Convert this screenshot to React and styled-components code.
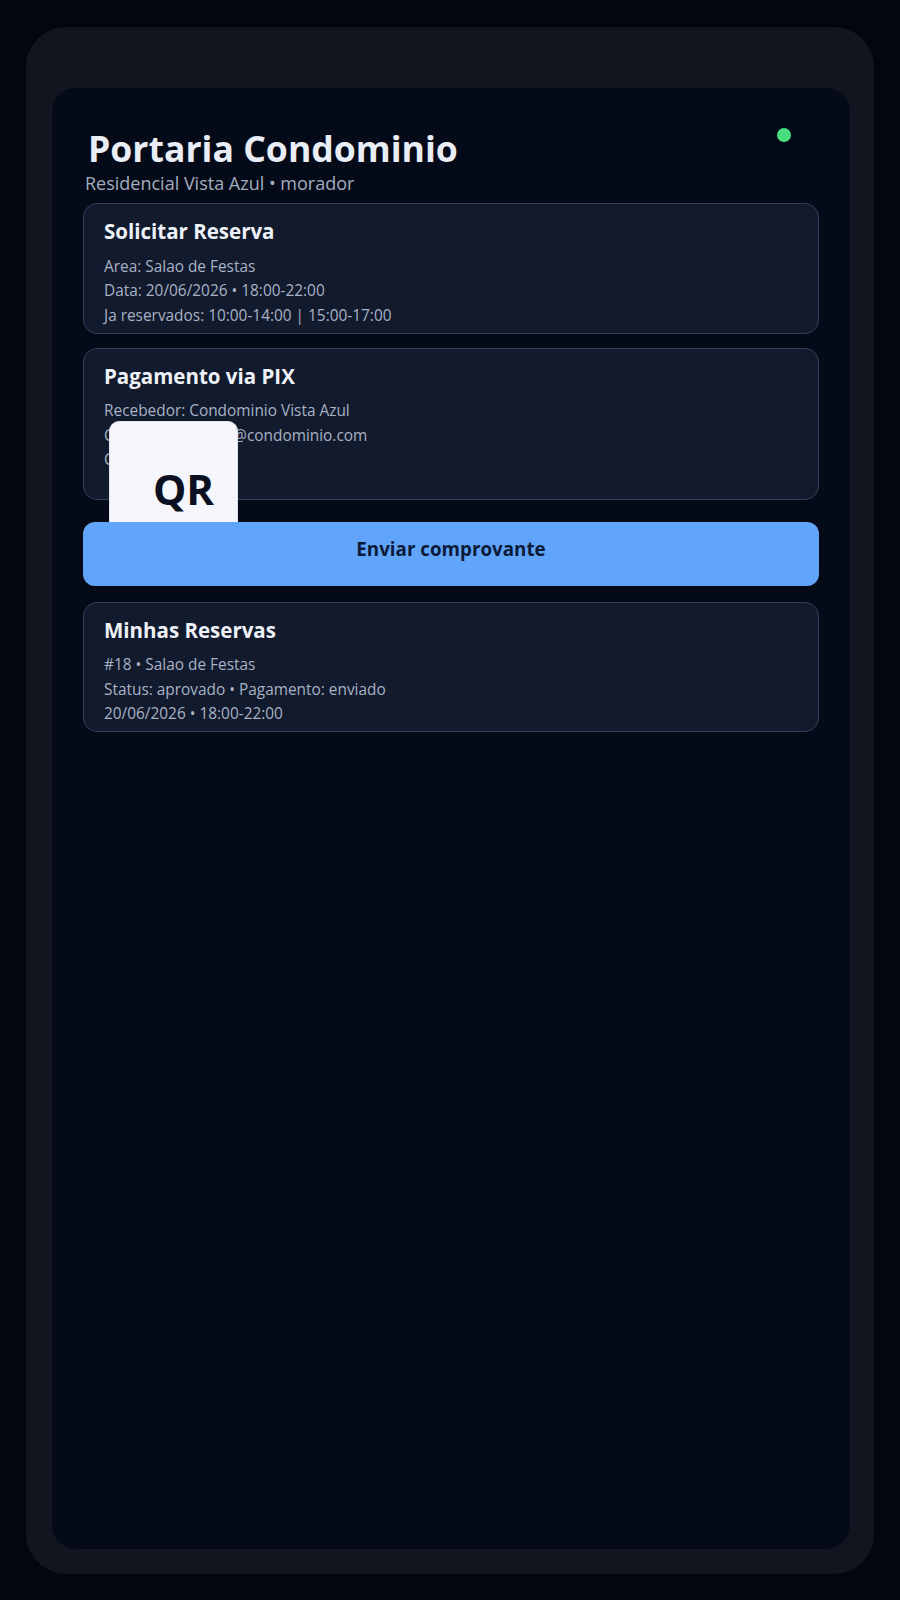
import React from "react";
import styled, { createGlobalStyle } from "styled-components";

const Global = createGlobalStyle`
  html, body { margin: 0; padding: 0; background: #02060f; }
  body { font-family: "Open Sans", "Noto Sans", sans-serif; }
  * { box-sizing: border-box; }
`;

const Page = styled.div`
  width: 900px;
  height: 1600px;
  padding: 27px 26px 26px 26px;
  display: flex;
  background: #02060f;
`;

const Device = styled.div`
  flex: 1;
  display: flex;
  border-radius: 40px;
  background: #11151f;
  padding: 61px 24px 25px 26px;
`;

const Screen = styled.main`
  flex: 1;
  display: flex;
  flex-direction: column;
  border-radius: 24px;
  background: #050a18;
  padding: 38px 31px 0 31px;
`;

const Header = styled.header`
  display: flex;
  justify-content: space-between;
  align-items: flex-start;
  padding-right: 28px;
  margin-bottom: 9px;
`;

const HeaderText = styled.div`
  display: flex;
  flex-direction: column;
  gap: 2px;
`;

const Title = styled.h1`
  margin: 0 0 0 5px;
  font-size: 35.6px;
  line-height: 44px;
  font-weight: 700;
  color: #e9edf5;
`;

const Subtitle = styled.p`
  margin: 0 0 0 2px;
  font-size: 18px;
  line-height: 22px;
  font-weight: 400;
  color: #a3adbf;
`;

const StatusDot = styled.span`
  width: 14px;
  height: 14px;
  margin-top: 2px;
  border-radius: 50%;
  background: #4ade80;
`;

const Stack = styled.div`
  display: flex;
  flex-direction: column;
  gap: 14px;
`;

const Card = styled.section`
  position: relative;
  background: #121a2d;
  border: 1px solid #334056;
  border-radius: 14px;
  padding: 14px 20px ${(p) => p.$bottom || 4.5}px 20px;
`;

const CardTitle = styled.h2`
  margin: 0 0 10.5px 0;
  font-size: 20.5px;
  line-height: 26px;
  font-weight: 700;
  color: #eef2f8;
`;

const Line = styled.p`
  margin: 0;
  font-size: 15.4px;
  line-height: 24.5px;
  color: #a8b2c4;
  white-space: nowrap;
`;

const QrBox = styled.div`
  position: absolute;
  left: 25px;
  top: 72px;
  width: 129px;
  height: 128px;
  z-index: 1;
  display: flex;
  align-items: center;
  justify-content: center;
  padding: 8px 0 0 20px;
  border-radius: 10px;
  background: #f4f6fb;
  border: 1px solid #dfe3ec;
  font-size: 42px;
  font-weight: 700;
  color: #0b1020;
`;

const PrimaryButton = styled.button`
  position: relative;
  z-index: 2;
  height: 64px;
  margin: 8px 0 2px 0;
  display: flex;
  align-items: center;
  justify-content: center;
  padding: 0 0 9px 0;
  border: none;
  border-radius: 12px;
  background: #60a5fa;
  font-family: inherit;
  font-size: 18.8px;
  font-weight: 700;
  color: #0c1a3a;
  cursor: pointer;
`;

export default function App() {
  return (
    <>
      <Global />
      <Page>
        <Device>
          <Screen>
            <Header>
              <HeaderText>
                <Title>Portaria Condominio</Title>
                <Subtitle>Residencial Vista Azul • morador</Subtitle>
              </HeaderText>
              <StatusDot />
            </Header>
            <Stack>
              <Card>
                <CardTitle>Solicitar Reserva</CardTitle>
                <Line>Area: Salao de Festas</Line>
                <Line>Data: 20/06/2026 • 18:00-22:00</Line>
                <Line>Ja reservados: 10:00-14:00 | 15:00-17:00</Line>
              </Card>
              <Card $bottom={26}>
                <CardTitle>Pagamento via PIX</CardTitle>
                <Line>Recebedor: Condominio Vista Azul</Line>
                <Line>Chave PIX: sindico@condominio.com</Line>
                <Line>Cidade: Sao Paulo</Line>
                <QrBox>QR</QrBox>
              </Card>
              <PrimaryButton>Enviar comprovante</PrimaryButton>
              <Card>
                <CardTitle>Minhas Reservas</CardTitle>
                <Line>#18 • Salao de Festas</Line>
                <Line>Status: aprovado • Pagamento: enviado</Line>
                <Line>20/06/2026 • 18:00-22:00</Line>
              </Card>
            </Stack>
          </Screen>
        </Device>
      </Page>
    </>
  );
}
